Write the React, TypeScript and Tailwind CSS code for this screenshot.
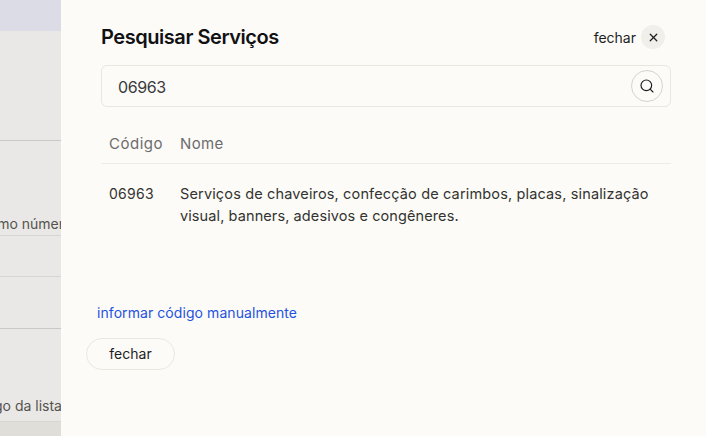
import React from 'react'
import { Search, X } from 'lucide-react'

export default function App() {
  return (
    <div className="flex h-[436px] w-[706px] overflow-hidden bg-[#fcfbf8] font-['Inter',sans-serif] text-[#1d1d1f]">
      {/* Page behind the drawer */}
      <div className="flex w-[61px] shrink-0 flex-col overflow-hidden bg-[#e9e8e6] text-[14px] text-[#55534f]">
        <div className="h-[31px] bg-[#dcdce6]" />
        <div className="h-[110px] border-b border-[#c9c8c5]" />
        <div className="flex h-[95px] items-end justify-end whitespace-nowrap border-b border-[#d6d5d1] pb-[1px]">
          <span className="-mr-[3px]">mo númer</span>
        </div>
        <div className="h-[41px] border-b border-[#d6d5d1]" />
        <div className="h-[52px] border-b border-[#c9c8c5]" />
        <div className="flex h-[93px] items-end justify-end whitespace-nowrap border-b border-[#d6d5d1] pb-[5px]">
          <span className="-mr-[1px]">go da lista</span>
        </div>
        <div className="flex-1 bg-[#e0ded8]" />
      </div>

      {/* Drawer */}
      <div className="flex flex-1 flex-col pl-[25px] pr-[35px] pt-[22px]">
        <div className="ml-[15px] flex h-[30px] items-center justify-between pr-[6px]">
          <h1 className="text-[20px] font-semibold tracking-[-0.45px] text-[#111114]">Pesquisar Serviços</h1>
          <button className="flex items-center gap-[5px] text-[14px]">
            fechar
            <span className="flex h-6 w-6 items-center justify-center rounded-full bg-[#f1efea]">
              <X size={13} strokeWidth={2.25} />
            </span>
          </button>
        </div>

        <div className="ml-[15px] mt-[13px] flex h-[42px] items-center justify-between rounded-md border border-[#e9e6dd] pl-4 pr-[7px]">
          <span className="pt-[2px] text-[16px] tracking-[-0.4px] text-[#3a3a3c]">06963</span>
          <span className="flex h-8 w-8 items-center justify-center rounded-full border border-[#d5d3ce]">
            <Search size={16} strokeWidth={1.75} />
          </span>
        </div>

        <table className="ml-[15px] mt-[16px] w-[570px] border-collapse text-left text-[14px]">
          <thead>
            <tr className="border-b border-[#eeece7] text-[#6d6c6c]">
              <th className="h-[40px] w-[79px] pl-2 pt-[3px] text-[15px] font-normal tracking-[0.5px]">Código</th>
              <th className="pt-[3px] text-[15px] font-normal tracking-[0.35px]">Nome</th>
            </tr>
          </thead>
          <tbody>
            <tr className="text-[#33332f]">
              <td className="pl-2 pt-[19px] align-top leading-[22px] tracking-[0.25px]">06963</td>
              <td className="pt-[19px] text-[14.5px] leading-[22px] tracking-[0.15px]">
                Serviços de chaveiros, confecção de carimbos, placas, sinalização
                <br />
                <span className="tracking-[0.1px]">visual, banners, adesivos e congêneres.</span>
              </td>
            </tr>
          </tbody>
        </table>

        <a className="ml-[11px] mt-[76px] text-[14px] leading-5 tracking-[0.07px] text-[#1f52e0]">informar código manualmente</a>

        <button className="mt-[15px] h-8 w-[89px] rounded-full border border-[#ebe8df] text-[14px] text-[#1d1d1f]">
          fechar
        </button>
      </div>
    </div>
  )
}
